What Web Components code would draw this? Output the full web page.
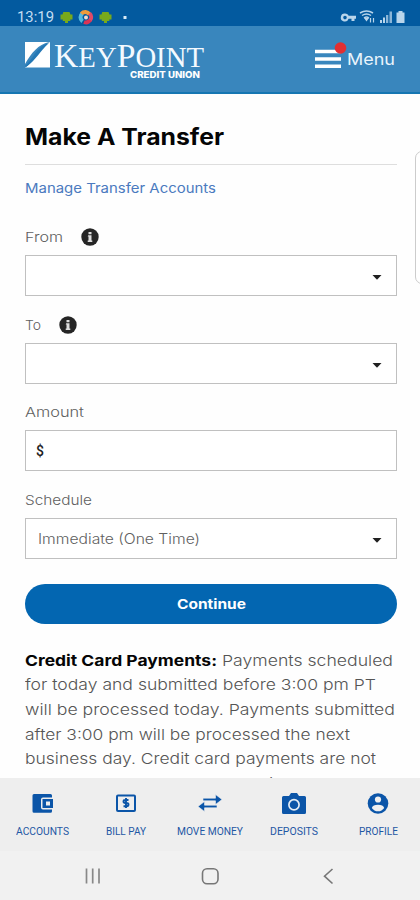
<!DOCTYPE html>
<html lang="en"><head><meta charset="utf-8"><title>Make A Transfer</title>
<style>
html,body{margin:0;width:420px;height:900px;overflow:hidden;background:#fefefe;font-family:Inter,"Open Sans",sans-serif}
</style></head><body><transfer-app></transfer-app>
<script>
const define=(name,html,after)=>customElements.define(name,class extends HTMLElement{
  connectedCallback(){if(this.shadowRoot)return;this.attachShadow({mode:'open'}).innerHTML=typeof html==='function'?html(this):html;if(after)after(this);}
});

/* Text stretched horizontally to fill a given width */
define('fit-text',e=>`<style>:host{display:block;white-space:nowrap;width:${e.getAttribute('w')}px}span{display:inline-block;white-space:pre;transform-origin:0 50%}</style><span><slot></slot></span>`,e=>{
  const s=e.shadowRoot.querySelector('span');
  requestAnimationFrame(()=>{s.style.transform='scaleX('+(+e.getAttribute('w')/s.getBoundingClientRect().width)+')';});
});

define('status-bar',`<style>
:host{display:flex;box-sizing:border-box;height:26px;background:#035a9f;padding:7px 14px 0 17px;align-items:center;color:#c5def2;font:15px Roboto,sans-serif}
svg{display:block}.n{margin-left:5px}.r{margin-left:auto}</style>
<fit-text w="37">13:19</fit-text>
<svg class="n" width="72" height="18" viewBox="0 0 72 18">
<g fill="#78a91c"><path id="a" d="M4.300 4h6.200l1 2.500h2v5h-2.200V13H9v2H6v-2H3.800v-1.500H1.500v-5h2z"/><use href="#a" x="39"/></g>
<g fill="none" stroke-width="4"><path d="M23.500 13.300a5 5 0 0 1 0-8" stroke="#55b9df"/><path d="M22.500 5.800a5 5 0 0 1 8 .5" stroke="#ef9b3b"/><path d="M30.500 5.500a5 5 0 0 1 .5 7" stroke="#e24a68"/><path d="M31 12a5 5 0 0 1-6 2" stroke="#dd3456"/></g><circle cx="27" cy="9.500" r="2" fill="#f1d8ce"/>
<rect x="64.500" y="8" width="3" height="3" fill="#d8eaf7"/></svg>
<svg class="r" width="66" height="18" viewBox="0 0 66 18" fill="#b9d5eb"><path fill-rule="evenodd" d="M5 5.500c2 0 3 1 3.600 2.200H16v3h-1.500V13h-3v-2.300H8.600A4 4 0 1 1 5 5.500zm0 2.300a1.800 1.800 0 1 0 0 3.600 1.800 1.800 0 0 0 0-3.600z"/><g fill="none" stroke="#b9d5eb" stroke-width="1.500"><path d="M20 5q6.500-4 13 0M22 7.500q4.500-3 9 0M24 10q2.500-1.800 5 0"/><path d="M30.500 10v4.500M33.500 10v4.500" stroke-width="1.200"/></g><path d="M24 10h5l-2.500 3.500zM40 12h2v3h-2zM43 9.500h2V15h-2z"/><path d="M46 7h2.300v8H46zM49.500 3.500H52V15h-2.500z" opacity=".75"/><path d="M56.500 4.500h2V3h4v1.500h2V15h-8z"/></svg>`);

define('brand-logo',`<style>:host{display:flex;gap:4px;width:182px}svg{display:block;overflow:visible}.w{display:flex;flex-direction:column}
.c{align-self:flex-end;margin:-1px 6px 0 0;font:800 9px/9px Inter,sans-serif;color:#fff}</style>
<svg width="25" height="26" viewBox="0 0 25 26"><path d="M0 0h24C13 3 7 10 0 22z" fill="#fff"/><path d="M25 0v25.500H0C8 21 9 15 15 9c3-3 6-5 8-8z" fill="#fff"/><path d="M0 24C7 18 9 11 15 6c3-3 6-4 9-5C14 10 12 17 1 25" fill="#2478b5"/></svg>
<div class="w"><svg width="152" height="29" viewBox="0 0 152 29" fill="#f4faff" font-family="Liberation Serif,serif"><text y="25" font-size="34" textLength="150" lengthAdjust="spacingAndGlyphs">K<tspan font-size="29">EY</tspan>P<tspan font-size="29">OINT</tspan></text></svg><fit-text class="c" w="70">CREDIT UNION</fit-text></div>`);

define('app-header',`<style>:host{display:flex;box-sizing:border-box;height:68px;background:#3986bd;border-bottom:2px solid #1676b2;padding:16px 25px 0}
.m{display:flex;margin-left:auto;color:#e9f4fc;font-size:16px;line-height:20px}svg{display:block}fit-text{margin-top:7px}</style>
<brand-logo></brand-logo><div class="m"><svg width="33" height="29" viewBox="0 0 33 29"><path d="M1 9.500h26M1 17h26M1 24.200h26" stroke="#fff" stroke-width="3.500"/><circle cx="26.500" cy="6" r="5.800" fill="#e12f32"/></svg><fit-text w="48">Menu</fit-text></div>`);

define('info-icon',`<style>:host{display:block;height:18px}svg{display:block}</style><svg width="18" height="18" viewBox="0 0 18 18"><circle cx="9" cy="9" r="8.700" fill="#252525"/><path d="M7.200 7.200h3.300v5.200h.8v1.500H6.700v-1.500h.8V8.600h-.8zM7.500 3.900h3v2.300h-3z" fill="#ddd"/></svg>`);

define('form-field',e=>`<style>:host{display:block;height:87.700px}.l{display:flex;align-items:center;gap:18px;height:20px;color:#606060;font-size:13.500px;font-weight:300}
.b{box-sizing:border-box;height:41px;margin-top:8px;border:1px solid #c0c0c0;display:flex;align-items:center;padding:0 14px 0 ${e.hasAttribute('money')?10:12}px;font-size:14px;color:#606060;font-weight:300;background:#fff}
svg{margin-left:auto;margin-top:4px}</style>
<div class="l"><fit-text w="${e.getAttribute('w')}">${e.getAttribute('label')}</fit-text>${e.hasAttribute('info')?'<info-icon></info-icon>':''}</div><div class="b"><slot></slot>${e.hasAttribute('money')?'':'<svg width="10" height="5" viewBox="0 0 10 5"><path d="M.5 0h9L5 4.800z" fill="#202020"/></svg>'}</div>`);

define('action-button',`<style>:host{display:flex;height:40px;border-radius:20px;background:#0366b1;color:#fff;font-size:13.500px;font-weight:700;align-items:center;justify-content:center;margin-top:6px}</style><slot></slot>`);

define('payment-note',`<style>:host{display:block;color:#555;font-size:15px;line-height:24.600px;font-weight:300}.f{display:flex;gap:5px}.f fit-text:first-child{color:#050505;font-weight:700}</style>
<div class="f"><fit-text w="192">Credit Card Payments:</fit-text><fit-text w="171">Payments scheduled</fit-text></div>
<fit-text w="351">for today and submitted before 3:00 pm PT</fit-text><fit-text w="370">will be processed today. Payments submitted</fit-text><fit-text w="325">after 3:00 pm will be processed the next</fit-text><fit-text w="351">business day. Credit card payments are not</fit-text><fit-text w="335">processed on weekends and holidays. To be</fit-text>`);

define('transfer-form',`<style>:host{display:block;box-sizing:border-box;height:684px;overflow:hidden;padding:27px 23px 0 25px;position:relative}
h1{margin:0;font-size:22.500px;line-height:32px;font-weight:700;color:#050505}.rule{height:1px;background:#dedede;margin-top:11px}a{display:block;color:#4b7abe;font-size:13.500px;line-height:20px;margin:13px 0 29px;font-weight:400}
payment-note{margin-top:25px}.edge{position:absolute;left:415px;top:57px;width:20px;height:131px;border:1.500px solid #ccc;border-radius:7px;background:#fff}</style>
<h1><fit-text w="199">Make A Transfer</fit-text></h1><div class="rule"></div><a><fit-text w="191">Manage Transfer Accounts</fit-text></a>
<form-field label="From" w="38" info></form-field><form-field label="To" w="16" info></form-field><form-field label="Amount" w="59" money><span style="font:500 14px Roboto,sans-serif;color:#222">$</span></form-field><form-field label="Schedule" w="67"><fit-text w="162">Immediate (One Time)</fit-text></form-field>
<action-button><fit-text w="69">Continue</fit-text></action-button><payment-note></payment-note><div class="edge"></div>`);

define('nav-item',e=>`<style>:host{display:flex;flex-direction:column;align-items:center;width:84px;padding-top:13px;color:#1e57a4;font:10px/12px Roboto,sans-serif}svg{display:block;margin-bottom:9px}</style><svg width="28" height="26" viewBox="0 0 28 26" fill="#0b55a8">${({
wallet:'<path fill-rule="evenodd" d="M6 3h16.500A1.500 1.500 0 0 1 24 4.500V6.500h-9a2 2 0 0 0-2 2v8a2 2 0 0 0 2 2h9v1.800a1.500 1.500 0 0 1-1.500 1.500H6a1.500 1.500 0 0 1-1.500-1.500V4.500A1.500 1.500 0 0 1 6 3zM14.500 8H25v9H14.500zm3.500 2.500v4h4v-4z"/>',
bill:'<rect x="5" y="4.500" width="18" height="15.500" rx="1" fill="none" stroke="#0b55a8" stroke-width="2"/><path d="M16.500 9h-3.200q-1.800 0-1.800 1.500t1.800 1.500h1.400q1.800 0 1.800 1.600t-1.800 1.600h-3.200M14 7v10" fill="none" stroke="#0b55a8" stroke-width="1.900"/>',
move:'<path d="M7 7.200h12.500V3.500l6.500 5-6.500 5V9.800H7zM21 14.200H8.500V10.500L2 15.500l6.500 5v-3.700H21z" stroke="#eee" stroke-width=".6"/>',
camera:'<path d="M3.500 5H9l2-3h6l2 3h5.500Q26 5 26 6.500v15q0 1.500-1.500 1.500h-21Q2 23 2 21.500v-15Q2 5 3.500 5z"/><circle cx="14" cy="13.700" r="5.100" fill="none" stroke="#e5edf5" stroke-width="1.700"/>',
profile:'<circle cx="14" cy="12.500" r="10.300"/><circle cx="14" cy="8.500" r="3.100" fill="#f0f0f0"/><path d="M7.800 17q1-3.300 6.200-3.300T20.200 17a7.500 7.500 0 0 1-12.400 0z" fill="#f0f0f0"/>'})[e.getAttribute('icon')]}</svg><fit-text w="${e.getAttribute('w')}">${e.getAttribute('label')}</fit-text>`);

define('app-nav',`<style>:host{display:flex;height:73px;background:#eee}</style><nav-item icon="wallet" label="ACCOUNTS" w="53"></nav-item><nav-item icon="bill" label="BILL PAY" w="40"></nav-item><nav-item icon="move" label="MOVE MONEY" w="66"></nav-item><nav-item icon="camera" label="DEPOSITS" w="48"></nav-item><nav-item icon="profile" label="PROFILE" w="39"></nav-item>`);

define('system-nav',`<style>:host{display:flex;height:49px;background:#f1f1f1;justify-content:center;gap:100px;align-items:center}svg{display:block}</style>
<svg width="18" height="18" viewBox="0 0 18 18"><path d="M3.500 1.500v15M9.700 1.500v15M16 1.500v15" stroke="#888" stroke-width="1.700"/></svg><svg width="18" height="18" viewBox="0 0 18 18"><rect x="1.500" y="1.800" width="15.500" height="15" rx="4.500" fill="none" stroke="#777" stroke-width="1.600"/></svg><svg width="18" height="18" viewBox="0 0 18 18"><path d="M13.500 2L5.500 9.200l8 7.300" fill="none" stroke="#777" stroke-width="1.600"/></svg>`);

define('transfer-app',`<style>:host{display:block;width:420px;height:900px;overflow:hidden}</style><status-bar></status-bar><app-header></app-header><transfer-form></transfer-form><app-nav></app-nav><system-nav></system-nav>`);
</script></body></html>
